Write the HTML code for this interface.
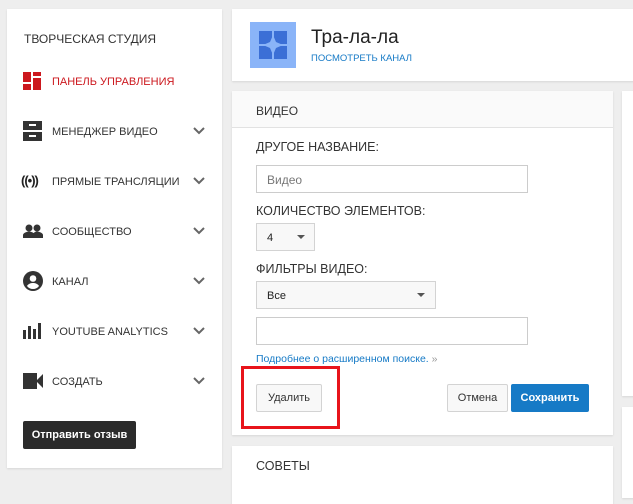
<!DOCTYPE html><html><head><meta charset="utf-8"><style>
*{box-sizing:border-box;margin:0;padding:0}
html,body{width:633px;height:504px;overflow:hidden}
body{background:#eeeeee;font-family:"Liberation Sans",Arial,sans-serif;position:relative;color:#333}
.card{position:absolute;background:#fff;box-shadow:0 1px 2px rgba(0,0,0,.1)}
.abs{position:absolute}
.it{position:absolute;left:52px;font-size:11px;color:#333;line-height:14px}
.ic{position:absolute;left:23px}
.chev{position:absolute;left:193px;width:12px}
.lbl{position:absolute;left:256px;font-size:12.5px;color:#333}
.inp{position:absolute;border:1px solid #ccc;background:#fff}
.sel{position:absolute;border:1px solid #d3d3d3;background:#f8f8f8;font-size:11px;color:#222}
.btn{position:absolute;border:1px solid #d3d3d3;background:#f8f8f8;font-size:11px;color:#333;text-align:center;line-height:26px;border-radius:2px}
</style></head><body>
<div class="card" style="left:7px;top:9px;width:215px;height:459px">
<div class="abs" style="left:17px;top:23px;font-size:12px;color:#333">ТВОРЧЕСКАЯ СТУДИЯ</div>
</div>
<svg class="ic" style="top:72px" width="18" height="18" viewBox="0 0 18 18"><rect x="0" y="0" width="8" height="10" fill="#cc181e"/><rect x="10" y="0" width="8" height="4" fill="#cc181e"/><rect x="10" y="6" width="8" height="12" fill="#cc181e"/><rect x="0" y="12" width="8" height="6" fill="#cc181e"/></svg>
<div class="it" style="top:75px;color:#cc181e">ПАНЕЛЬ УПРАВЛЕНИЯ</div>
<svg class="ic" style="top:121px" width="19" height="20" viewBox="0 0 19 20"><rect x="0" y="0" width="19" height="9" fill="#333"/><rect x="0" y="11" width="19" height="9" fill="#333"/><rect x="6" y="3" width="7" height="2" fill="#fff"/><rect x="6" y="14" width="7" height="2" fill="#fff"/></svg>
<div class="it" style="top:125px">МЕНЕДЖЕР ВИДЕО</div>
<div class="ic" style="top:173px;left:21px;font-size:13px;font-weight:bold;color:#222;letter-spacing:-1px">((•))</div>
<div class="it" style="top:175px">ПРЯМЫЕ ТРАНСЛЯЦИИ</div>
<svg class="ic" style="top:224px" width="20" height="14" viewBox="0 0 20 14"><circle cx="6" cy="4" r="3.5" fill="#333"/><circle cx="14" cy="4" r="3.5" fill="#333"/><path d="M0 14v-3c0-2 4-3.5 6-3.5s6 1.5 6 3.5v3z" fill="#333"/><path d="M10 14v-3c0-2 2-3.5 4-3.5s6 1.5 6 3.5v3z" fill="#333"/></svg>
<div class="it" style="top:225px">СООБЩЕСТВО</div>
<svg class="ic" style="top:271px" width="20" height="20" viewBox="0 0 20 20"><circle cx="10" cy="10" r="10" fill="#333"/><circle cx="10" cy="7.5" r="3.3" fill="#fff"/><path d="M4 15c1.5-2.5 4-3 6-3s4.5.5 6 3c-1.5 2-3.5 3-6 3s-4.5-1-6-3z" fill="#fff"/></svg>
<div class="it" style="top:275px">КАНАЛ</div>
<svg class="ic" style="top:323px" width="19" height="16" viewBox="0 0 19 16"><rect x="0" y="7" width="3" height="9" fill="#333"/><rect x="5" y="3" width="3" height="13" fill="#333"/><rect x="10" y="6" width="3" height="10" fill="#333"/><rect x="15" y="0" width="3" height="16" fill="#333"/></svg>
<div class="it" style="top:325px">YOUTUBE ANALYTICS</div>
<svg class="ic" style="top:373px" width="20" height="16" viewBox="0 0 20 16"><rect x="0" y="0" width="14" height="16" fill="#333"/><path d="M13 8l7-7v14z" fill="#333"/></svg>
<div class="it" style="top:375px">СОЗДАТЬ</div>
<svg class="chev" style="top:127px" viewBox="0 0 12 8" height="8"><path d="M1 1l5 5 5-5" stroke="#666" stroke-width="2" fill="none"/></svg>
<svg class="chev" style="top:177px" viewBox="0 0 12 8" height="8"><path d="M1 1l5 5 5-5" stroke="#666" stroke-width="2" fill="none"/></svg>
<svg class="chev" style="top:227px" viewBox="0 0 12 8" height="8"><path d="M1 1l5 5 5-5" stroke="#666" stroke-width="2" fill="none"/></svg>
<svg class="chev" style="top:277px" viewBox="0 0 12 8" height="8"><path d="M1 1l5 5 5-5" stroke="#666" stroke-width="2" fill="none"/></svg>
<svg class="chev" style="top:327px" viewBox="0 0 12 8" height="8"><path d="M1 1l5 5 5-5" stroke="#666" stroke-width="2" fill="none"/></svg>
<svg class="chev" style="top:377px" viewBox="0 0 12 8" height="8"><path d="M1 1l5 5 5-5" stroke="#666" stroke-width="2" fill="none"/></svg>
<div class="abs" style="left:23px;top:421px;width:113px;height:28px;background:#2b2b2b;border-radius:2px;color:#fff;font-size:11px;font-weight:bold;line-height:28px;text-align:center">Отправить отзыв</div>

<div class="card" style="left:232px;top:9px;width:410px;height:72px"></div>
<svg class="abs" style="left:250px;top:22px" width="46" height="46" viewBox="0 0 46 46"><rect width="46" height="46" fill="#8ab4f8"/><rect x="9" y="9" width="28" height="28" fill="#3b6fd6"/><path d="M23 13l3 7 7 3-7 3-3 7-3-7-7-3 7-3z" fill="#8ab4f8"/><rect x="22" y="9" width="2" height="28" fill="#8ab4f8"/><rect x="9" y="22" width="28" height="2" fill="#8ab4f8"/></svg>
<div class="abs" style="left:311px;top:27px;font-size:19px;color:#222">Тра-ла-ла</div>
<div class="abs" style="left:311px;top:53px;font-size:9.5px;color:#167ac6">ПОСМОТРЕТЬ КАНАЛ</div>

<div class="card" style="left:232px;top:91px;width:381px;height:344px">
<div style="height:37px;background:#fafafa;border-bottom:1px solid #e2e2e2"></div></div>
<div class="card" style="left:622px;top:91px;width:20px;height:305px"></div>
<div class="card" style="left:622px;top:407px;width:20px;height:91px"></div>
<div class="card" style="left:232px;top:446px;width:381px;height:70px"></div>
<div class="abs" style="left:256px;top:104px;font-size:12px;color:#333">ВИДЕО</div>
<div class="lbl" style="top:140px">ДРУГОЕ НАЗВАНИЕ:</div>
<div class="inp" style="left:256px;top:165px;width:272px;height:28px;font-size:12px;color:#777;padding:7px 0 0 10px">Видео</div>
<div class="lbl" style="top:204px">КОЛИЧЕСТВО ЭЛЕМЕНТОВ:</div>
<div class="sel" style="left:256px;top:223px;width:59px;height:28px;padding:8px 0 0 10px">4<span style="position:absolute;left:40px;top:11px;border:4px solid transparent;border-top:4px solid #555"></span></div>
<div class="lbl" style="top:262px">ФИЛЬТРЫ ВИДЕО:</div>
<div class="sel" style="left:256px;top:281px;width:180px;height:28px;padding:8px 0 0 10px">Все<span style="position:absolute;left:160px;top:11px;border:4px solid transparent;border-top:4px solid #555"></span></div>
<div class="inp" style="left:256px;top:317px;width:272px;height:28px"></div>
<div class="abs" style="left:256px;top:353px;font-size:10.5px;color:#167ac6">Подробнее о расширенном поиске. <span style="color:#999">»</span></div>
<div class="btn" style="left:256px;top:384px;width:66px;height:28px">Удалить</div>
<div class="btn" style="left:447px;top:384px;width:61px;height:28px">Отмена</div>
<div class="btn" style="left:511px;top:384px;width:78px;height:28px;background:#167ac6;border-color:#167ac6;color:#fff;font-weight:bold">Сохранить</div>
<div class="abs" style="left:241px;top:366px;width:99px;height:63px;border:3px solid #e8141b"></div>
<div class="abs" style="left:256px;top:459px;font-size:12.5px;color:#333">СОВЕТЫ</div>
</body></html>
